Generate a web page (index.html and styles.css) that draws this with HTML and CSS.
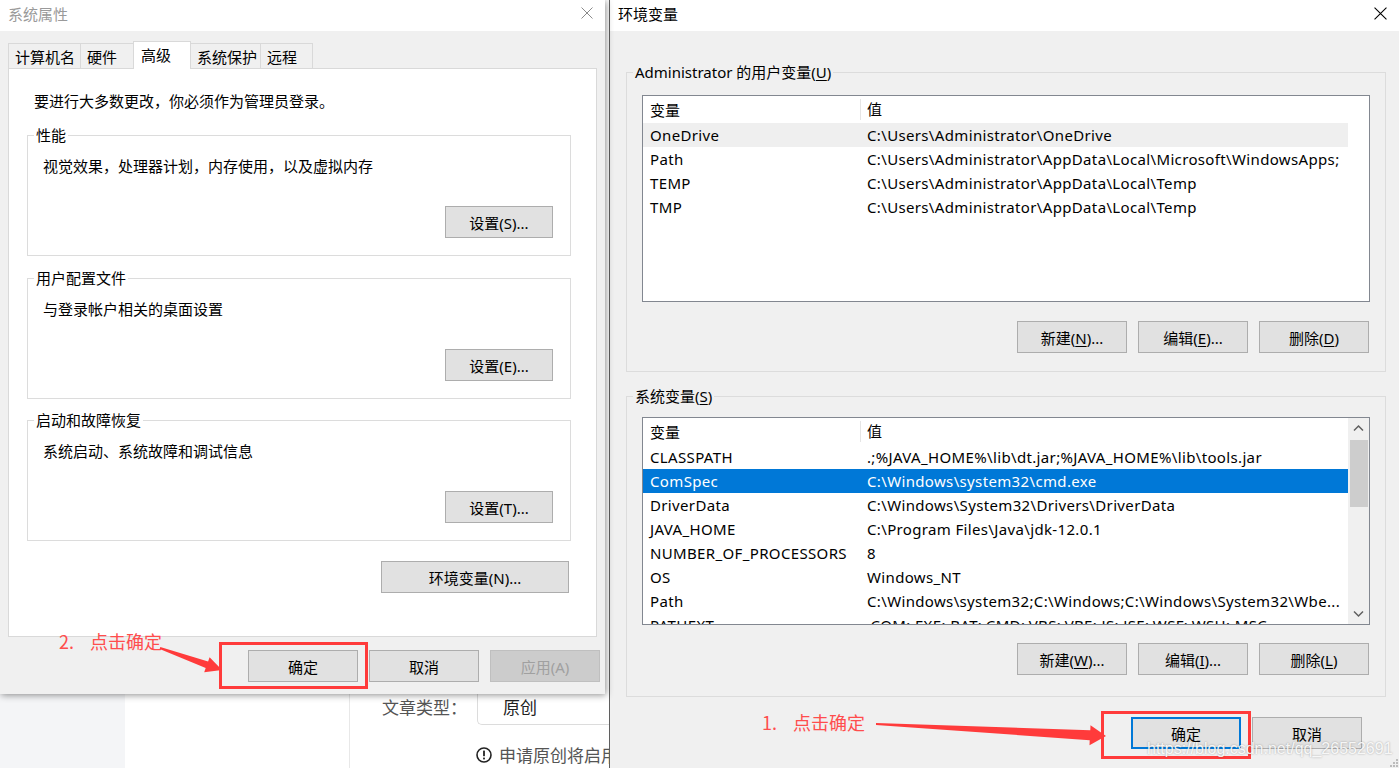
FILE: index.html
```html
<!DOCTYPE html>
<html lang="zh-CN">
<head>
    <meta charset="UTF-8">
    <title>系统属性 - 环境变量</title>
    <link rel="stylesheet" href="styles.css">
</head>
<body>
<div class="desk">

    <!-- page behind the dialogs -->
    <div class="page">
        <div class="page-side"></div>
        <div class="page-blank"></div>
        <div class="page-main">
            <div class="field-row">
                <span class="field-label">文章类型：</span>
                <span class="field-select">原创</span>
            </div>
            <div class="field-tip">
                <svg class="tip-icon" viewBox="0 0 16 16">
                    <circle cx="8" cy="8" r="7" fill="none" stroke="#222" stroke-width="1.6"/>
                    <rect x="7.1" y="3.6" width="1.8" height="5.6" fill="#222"/>
                    <rect x="7.1" y="10.6" width="1.8" height="1.8" fill="#222"/>
                </svg>
                <span>申请原创将启用</span>
            </div>
        </div>
    </div>

    <!-- 系统属性 -->
    <div class="win sys-win">
        <div class="titlebar">
            <span class="title title-dim">系统属性</span>
            <svg class="close close-dim" viewBox="0 0 12 12"><path d="M0.5 0.5L11.5 11.5M11.5 0.5L0.5 11.5"/></svg>
        </div>
        <div class="sys-body">
            <div class="tabs">
                <div class="tab">计算机名</div>
                <div class="tab">硬件</div>
                <div class="tab active">高级</div>
                <div class="tab tab-tight">系统保护</div>
                <div class="tab tab-narrow">远程</div>
            </div>
            <div class="panel">
                <p class="intro">要进行大多数更改，你必须作为管理员登录。</p>

                <fieldset class="group sys-group">
                    <legend>性能</legend>
                    <p class="group-text">视觉效果，处理器计划，内存使用，以及虚拟内存</p>
                    <div class="group-actions"><button class="btn btn-small">设置(S)...</button></div>
                </fieldset>

                <fieldset class="group sys-group">
                    <legend>用户配置文件</legend>
                    <p class="group-text">与登录帐户相关的桌面设置</p>
                    <div class="group-actions"><button class="btn btn-small">设置(E)...</button></div>
                </fieldset>

                <fieldset class="group sys-group">
                    <legend>启动和故障恢复</legend>
                    <p class="group-text">系统启动、系统故障和调试信息</p>
                    <div class="group-actions"><button class="btn btn-small">设置(T)...</button></div>
                </fieldset>

                <div class="env-action"><button class="btn btn-wide">环境变量(N)...</button></div>
            </div>
            <div class="dlg-buttons">
                <button class="btn">确定</button>
                <button class="btn">取消</button>
                <button class="btn" disabled>应用(A)</button>
            </div>
        </div>
    </div>

    <!-- 环境变量 -->
    <div class="win env-win">
        <div class="titlebar">
            <span class="title">环境变量</span>
            <svg class="close" viewBox="0 0 12 12"><path d="M0.5 0.5L11.5 11.5M11.5 0.5L0.5 11.5"/></svg>
        </div>
        <div class="env-body">
            <fieldset class="group env-group user-group">
                <legend>Administrator 的用户变量(<u>U</u>)</legend>
                <div class="list user-list">
                    <div class="list-cols">
                        <div class="list-head"><span class="col-name">变量</span><span class="col-val">值</span></div>
                        <div class="list-row soft"><span class="col-name">OneDrive</span><span class="col-val">C:\Users\Administrator\OneDrive</span></div>
                        <div class="list-row"><span class="col-name">Path</span><span class="col-val">C:\Users\Administrator\AppData\Local\Microsoft\WindowsApps;</span></div>
                        <div class="list-row"><span class="col-name">TEMP</span><span class="col-val">C:\Users\Administrator\AppData\Local\Temp</span></div>
                        <div class="list-row"><span class="col-name">TMP</span><span class="col-val">C:\Users\Administrator\AppData\Local\Temp</span></div>
                    </div>
                </div>
                <div class="list-actions">
                    <button class="btn">新建(<u>N</u>)...</button>
                    <button class="btn">编辑(<u>E</u>)...</button>
                    <button class="btn">删除(<u>D</u>)</button>
                </div>
            </fieldset>

            <fieldset class="group env-group system-group">
                <legend>系统变量(<u>S</u>)</legend>
                <div class="list sys-list">
                    <div class="list-cols">
                        <div class="list-head"><span class="col-name">变量</span><span class="col-val">值</span></div>
                        <div class="list-row"><span class="col-name">CLASSPATH</span><span class="col-val">.;%JAVA_HOME%\lib\dt.jar;%JAVA_HOME%\lib\tools.jar</span></div>
                        <div class="list-row selected"><span class="col-name">ComSpec</span><span class="col-val">C:\Windows\system32\cmd.exe</span></div>
                        <div class="list-row"><span class="col-name">DriverData</span><span class="col-val">C:\Windows\System32\Drivers\DriverData</span></div>
                        <div class="list-row"><span class="col-name">JAVA_HOME</span><span class="col-val">C:\Program Files\Java\jdk-12.0.1</span></div>
                        <div class="list-row"><span class="col-name">NUMBER_OF_PROCESSORS</span><span class="col-val">8</span></div>
                        <div class="list-row"><span class="col-name">OS</span><span class="col-val">Windows_NT</span></div>
                        <div class="list-row"><span class="col-name">Path</span><span class="col-val">C:\Windows\system32;C:\Windows;C:\Windows\System32\Wbe...</span></div>
                        <div class="list-row"><span class="col-name">PATHEXT</span><span class="col-val">.COM;.EXE;.BAT;.CMD;.VBS;.VBE;.JS;.JSE;.WSF;.WSH;.MSC</span></div>
                    </div>
                    <div class="scrollbar">
                        <svg class="sb-arrow" viewBox="0 0 21 21"><path d="M6 12.5L10.5 8L15 12.5"/></svg>
                        <div class="sb-thumb"></div>
                        <div class="sb-track"></div>
                        <svg class="sb-arrow" viewBox="0 0 21 21"><path d="M6 8.5L10.5 13L15 8.5"/></svg>
                    </div>
                </div>
                <div class="list-actions">
                    <button class="btn">新建(<u>W</u>)...</button>
                    <button class="btn">编辑(<u>I</u>)...</button>
                    <button class="btn">删除(<u>L</u>)</button>
                </div>
            </fieldset>

            <div class="dlg-buttons env-buttons">
                <button class="btn btn-default">确定</button>
                <button class="btn">取消</button>
            </div>
        </div>
        <svg class="grip" viewBox="0 0 10 10">
            <rect x="8" y="2" width="2" height="2"/>
            <rect x="5" y="5" width="2" height="2"/>
            <rect x="8" y="5" width="2" height="2"/>
            <rect x="2" y="8" width="2" height="2"/>
            <rect x="5" y="8" width="2" height="2"/>
            <rect x="8" y="8" width="2" height="2"/>
        </svg>
    </div>

    <!-- annotations drawn over the screenshot -->
    <div class="mark mark-left"></div>
    <div class="mark mark-right"></div>
    <div class="note note-left">2.<span class="note-text">点击确定</span></div>
    <div class="note note-right">1.<span class="note-text">点击确定</span></div>
    <svg class="arrows" viewBox="0 0 1399 768">
        <polygon points="160.3,647.1 208.1,661.4 209.6,657.2 222,670 204.2,672.2 205.7,668 159.7,648.9"/>
        <polygon points="876,723 1090.3,730.2 1090.5,725.2 1106,736 1089.5,745.2 1089.7,740.2 876,725"/>
    </svg>
    <div class="watermark">https://blog.csdn.net/qq_26552691</div>
</div>
</body>
</html>
```

FILE: styles.css
```css
* {
    box-sizing: border-box;
}
body {
    margin: 0;
    font-family: "Noto Sans", "Noto Sans CJK SC", sans-serif;
    font-size: 15px;
    color: #000;
}
p {
    margin: 0;
}
.desk {
    position: relative;
    width: 1399px;
    height: 768px;
    overflow: hidden;
    background: #fff;
}

/* page behind */
.page {
    position: absolute;
    left: 0;
    top: 693px;
    width: 609px;
    height: 75px;
    display: flex;
    overflow: hidden;
    font-family: "Noto Sans CJK SC", sans-serif;
}
.page-side {
    width: 125px;
    flex: none;
    background: #f4f5f7;
}
.page-blank {
    width: 224px;
    flex: none;
}
.page-main {
    flex: 1;
    min-width: 0;
    border-left: 1px solid #e8e8e8;
    padding-left: 32px;
}
.field-row {
    display: flex;
    height: 32px;
}
.field-label {
    width: 95px;
    flex: none;
    line-height: 28px;
    font-size: 17px;
    color: #555;
}
.field-select {
    flex: 1;
    height: 32px;
    border-left: 1px solid #dcdcdc;
    border-bottom: 1px solid #dcdcdc;
    border-bottom-left-radius: 5px;
    padding-left: 25px;
    line-height: 28px;
    font-size: 17px;
    color: #222;
}
.field-tip {
    display: flex;
    align-items: center;
    gap: 7px;
    margin: 17px 0 0 94px;
    font-size: 17px;
    color: #555;
    white-space: nowrap;
}
.tip-icon {
    width: 16px;
    height: 16px;
    flex: none;
}

/* windows */
.win {
    position: absolute;
    top: 0;
    background: #f0f0f0;
}
.sys-win {
    left: 0;
    width: 605px;
    height: 694px;
    z-index: 2;
    box-shadow: 1px 1px 7px rgba(0, 0, 0, 0.45);
}
.env-win {
    left: 609px;
    width: 790px;
    height: 768px;
    z-index: 1;
    border-left: 1px solid #5f5f5f;
}
.titlebar {
    height: 31px;
    background: #fff;
    display: flex;
    align-items: center;
    justify-content: space-between;
    padding: 0 12px 5px 8px;
}
.title {
    font-family: "Noto Sans CJK SC", sans-serif;
    font-size: 15px;
    color: #000;
}
.title-dim {
    color: #9a9a9a;
}
.close {
    width: 13px;
    height: 13px;
    stroke: #000;
    stroke-width: 1;
    fill: none;
}
.close-dim {
    stroke: #8a8a8a;
    width: 12px;
    height: 12px;
}

/* buttons */
.btn {
    width: 110px;
    height: 32px;
    padding: 0;
    background: #e1e1e1;
    border: 1px solid #adadad;
    font-family: "Noto Sans", "Noto Sans CJK SC", sans-serif;
    font-size: 15px;
    color: #000;
}
.btn:disabled {
    background: #cccccc;
    border-color: #bfbfbf;
    color: #a0a0a0;
}
.btn-small {
    width: 108px;
}
.btn-wide {
    width: 188px;
}
.btn-default {
    border: 2px solid #0078d7;
}
.btn u {
    text-underline-offset: 2px;
}

/* 系统属性 body */
.sys-body {
    padding: 10px 0 0 8px;
}
.tabs {
    display: flex;
    align-items: flex-end;
    height: 27px;
}
.tab {
    min-width: 54px;
    height: 25px;
    padding: 2px 5px 0 6px;
    margin-right: -1px;
    border: 1px solid #d9d9d9;
    border-bottom: none;
    line-height: 21px;
    font-family: "Noto Sans CJK SC", sans-serif;
    white-space: nowrap;
}
.tab-tight {
    padding-right: 3px;
}
.tab-narrow {
    min-width: 53px;
}
.tab.active {
    position: relative;
    z-index: 1;
    min-width: 58px;
    height: 28px;
    margin-bottom: -1px;
    padding: 0 5px 0 7px;
    background: #fff;
    line-height: 26px;
}
.panel {
    width: 589px;
    height: 569px;
    background: #fff;
    border: 1px solid #d9d9d9;
    padding: 22px 0 0 18px;
    font-family: "Noto Sans CJK SC", sans-serif;
}
.intro {
    margin: 0 0 15px 7px;
    line-height: 20px;
}
.group {
    margin: 0;
    border: 1px solid #dcdcdc;
    min-width: 0;
}
.group legend {
    padding: 0 2px;
    margin-left: -9px;
    line-height: 18px;
    font-family: "Noto Sans", "Noto Sans CJK SC", sans-serif;
}
.group legend u {
    text-underline-offset: 2px;
}
.sys-group {
    width: 544px;
    height: 130px;
    padding: 12px 17px 17px 15px;
    margin-bottom: 13px;
}
.sys-group + .sys-group {
    margin-bottom: 12px;
}
.sys-group:last-of-type {
    margin-bottom: 0;
}
.group-text {
    line-height: 20px;
}
.group-actions {
    display: flex;
    justify-content: flex-end;
    margin-top: 30px;
}
.env-action {
    display: flex;
    justify-content: flex-end;
    width: 542px;
    margin-top: 20px;
}
.dlg-buttons {
    display: flex;
    justify-content: flex-end;
    gap: 11px;
    margin-top: 13px;
    padding-right: 5px;
}

/* 环境变量 body */
.env-body {
    padding: 0 13px 0 16px;
}
.env-group {
    width: 760px;
    padding: 14px 15px 18px 15px;
}
.user-group {
    margin-top: 32px;
}
.system-group {
    margin-top: 15px;
    padding-top: 12px;
    padding-bottom: 21px;
}
.list {
    height: 207px;
    background: #fff;
    border: 1px solid #828790;
    overflow: hidden;
    display: flex;
}
.sys-list {
    height: 208px;
}
.list-cols {
    width: 705px;
    flex: none;
}
.list-head,
.list-row {
    display: flex;
    white-space: nowrap;
}
.list-head {
    height: 27px;
    align-items: center;
}
.list-row {
    height: 24px;
    line-height: 24px;
    letter-spacing: 0.35px;
}
.col-name {
    width: 217px;
    padding-left: 7px;
    flex: none;
    overflow: hidden;
}
.col-val {
    flex: 1;
    padding-left: 7px;
    overflow: hidden;
}
.list-head .col-val {
    border-left: 1px solid #e5e5e5;
    padding-left: 6px;
    line-height: 21px;
}
.list-row.soft {
    background: #efefef;
}
.list-row.selected {
    background: #0078d7;
    color: #fff;
}
.scrollbar {
    flex: 1;
    display: flex;
    flex-direction: column;
    background: #f0f0f0;
}
.sb-arrow {
    width: 21px;
    height: 21px;
    flex: none;
    fill: none;
    stroke: #606060;
    stroke-width: 1.5;
}
.sb-thumb {
    height: 67px;
    margin: 1px 1px 0 2px;
    background: #cdcdcd;
}
.sb-track {
    flex: 1;
}
.list-actions {
    display: flex;
    justify-content: flex-end;
    gap: 11px;
    margin-top: 19px;
    padding-right: 1px;
}
.system-group .list-actions {
    margin-top: 18px;
}
.env-buttons {
    margin-top: 20px;
    padding-right: 24px;
}
.grip {
    position: absolute;
    right: 1px;
    bottom: 1px;
    width: 10px;
    height: 10px;
    fill: #bcbcbc;
}

/* annotations */
.mark {
    position: absolute;
    border: 3px solid #ff3b3b;
    z-index: 5;
}
.mark-left {
    left: 219px;
    top: 642px;
    width: 149px;
    height: 47px;
}
.mark-right {
    left: 1101px;
    top: 711px;
    width: 150px;
    height: 48px;
}
.note {
    position: absolute;
    z-index: 5;
    font-family: "Noto Sans CJK SC", sans-serif;
    font-size: 18px;
    line-height: 24px;
    color: #ff4d4d;
    white-space: nowrap;
}
.note-text {
    margin-left: 16px;
}
.note-left {
    left: 59px;
    top: 629px;
}
.note-right {
    left: 762px;
    top: 710px;
}
.arrows {
    position: absolute;
    left: 0;
    top: 0;
    width: 1399px;
    height: 768px;
    z-index: 5;
    fill: #ff3b3b;
}
.watermark {
    position: absolute;
    left: 1147px;
    top: 739px;
    z-index: 6;
    font-family: "Liberation Sans", sans-serif;
    font-size: 16px;
    line-height: 20px;
    color: rgba(255, 255, 255, 0.9);
    text-shadow: 0 0 2px rgba(0, 0, 0, 0.35);
    white-space: nowrap;
}
```
